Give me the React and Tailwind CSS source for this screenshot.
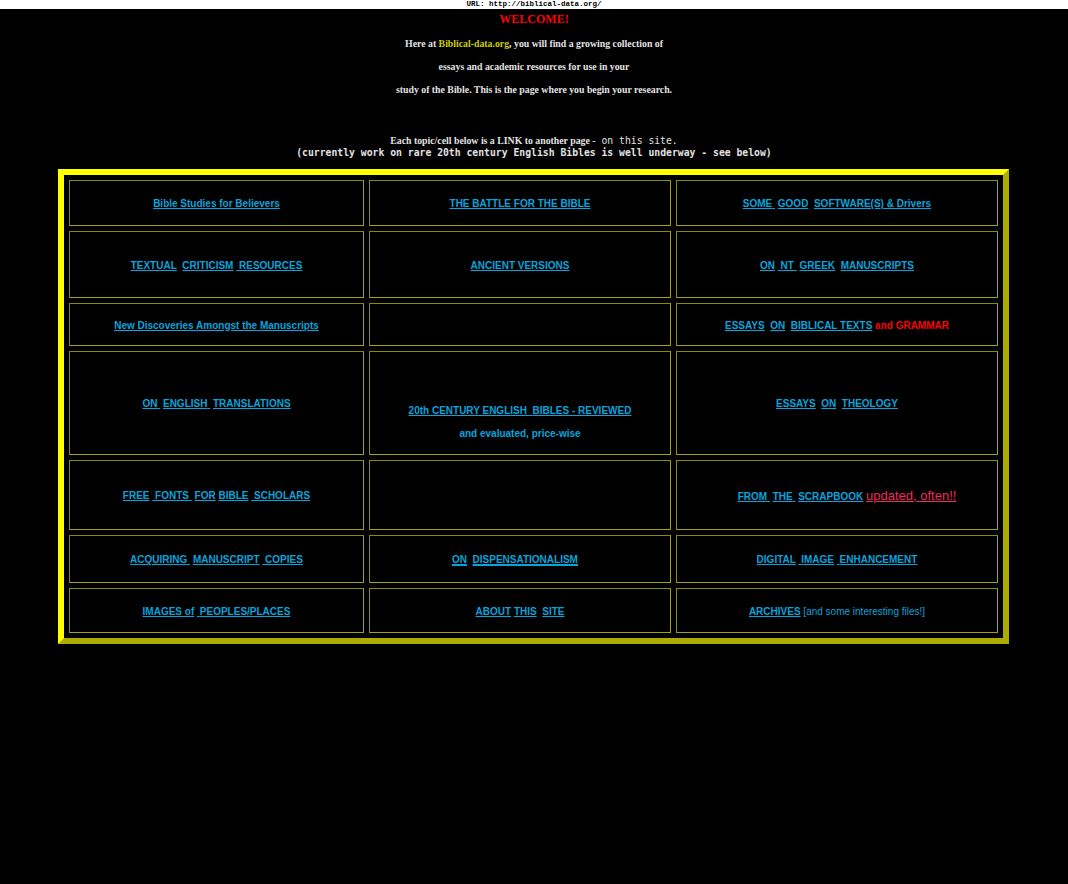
const sans = "font-['Liberation_Sans',Arial,sans-serif]";

function L({ children, className = "" }) {
  return (
    <a href="#" className={"underline decoration-1 underline-offset-[1px] " + className}>
      {children}
    </a>
  );
}

function Cell({ children, className = "" }) {
  return (
    <div
      className={
        "flex items-center justify-center border border-t-[#8a8a00] border-l-[#8a8a00] border-r-[#a4a400] border-b-[#a4a400] pt-[2px] text-center text-[10px] leading-[12px] font-bold text-[#0aa4dc] " +
        className
      }
    >
      {children}
    </div>
  );
}

export default function App() {
  const nb = "\u00a0";
  return (
    <div className="min-h-[884px] bg-black pb-10">
      <div className="h-[9px] bg-white text-center font-['Liberation_Mono',monospace] text-[7.5px] font-bold leading-[9px] text-black">
        URL: http://biblical-data.org/
      </div>

      <div className="pt-[3px] text-center font-['Liberation_Serif',serif] text-[12px] font-bold leading-[15px] text-[#ff0000]">
        WELCOME!
      </div>

      <div className="mt-[11px] flex flex-col items-center gap-[11px] font-['Liberation_Serif',serif] text-[9.8px] font-bold leading-[12px] text-[#e2e2e2]">
        <p>
          Here at <span className="text-[#cccc00]">Biblical-data.org</span>, you will find a growing collection of
        </p>
        <p>essays and academic resources for use in your</p>
        <p>study of the Bible. This is the page where you begin your research.</p>
      </div>

      <div className="mt-[38px] text-center text-[10px] leading-[12px] text-[#e2e2e2]">
        <p>
          <span className="font-['Liberation_Serif',serif] text-[9.8px] font-bold">
            Each topic/cell below is a LINK to another page -
          </span>
          <span className="font-['DejaVu_Sans_Mono',monospace] text-[9.75px]"> on this site.</span>
        </p>
        <p className="font-['DejaVu_Sans_Mono',monospace] text-[9.75px] font-bold">
          (currently work on rare 20th century English Bibles is well underway - see below)
        </p>
      </div>

      <div
        className={
          "ml-[58px] mt-[10px] grid w-[951px] grid-cols-[295px_302px_322px] grid-rows-[46px_67px_43px_104px_70px_48px_45px] gap-[5px] border-[6px] border-t-[#ffff00] border-l-[#ffff00] border-r-[#abab00] border-b-[#abab00] p-[5px] " +
          sans
        }
      >
        <Cell>
          <L>Bible Studies for Believers</L>
        </Cell>
        <Cell>
          <L>THE BATTLE FOR THE BIBLE</L>
        </Cell>
        <Cell>
          <span>
            <L>SOME{nb}</L> <L>GOOD</L>{nb} <L>SOFTWARE(S) &amp; Drivers</L>
          </span>
        </Cell>

        <Cell>
          <span>
            <L>TEXTUAL</L>{nb} <L>CRITICISM</L> <L>{nb}RESOURCES</L>
          </span>
        </Cell>
        <Cell>
          <L>ANCIENT VERSIONS</L>
        </Cell>
        <Cell>
          <span>
            <L>ON</L> <L>{nb}NT{nb}</L> <L>GREEK</L>{nb} <L>MANUSCRIPTS</L>
          </span>
        </Cell>

        <Cell>
          <L>New Discoveries Amongst the Manuscripts</L>
        </Cell>
        <Cell />
        <Cell>
          <span>
            <L>ESSAYS</L>{nb} <L>ON</L>{nb} <L>BIBLICAL TEXTS</L>
            <span className="text-[#ff0000]"> and GRAMMAR</span>
          </span>
        </Cell>

        <Cell>
          <span>
            <L>ON{nb}</L> <L>ENGLISH{nb}</L> <L>TRANSLATIONS</L>
          </span>
        </Cell>
        <Cell className="flex-col !justify-start gap-[11px] !pt-[53px]">
          <p>
            <L>20th CENTURY ENGLISH {nb}BIBLES - REVIEWED</L>
          </p>
          <p>and evaluated, price-wise</p>
        </Cell>
        <Cell>
          <span>
            <L>ESSAYS</L>{nb} <L>ON</L>{nb} <L>THEOLOGY</L>
          </span>
        </Cell>

        <Cell>
          <span>
            <L>FREE</L> <L>{nb}FONTS{nb}</L> <L>FOR</L> <L>BIBLE</L> <L>{nb}SCHOLARS</L>
          </span>
        </Cell>
        <Cell />
        <Cell className="pl-5">
          <span>
            <L>FROM{nb}</L> <L>THE{nb}</L> <L>SCRAPBOOK</L>{" "}
            <L className="text-[13px] font-normal text-[#ec2d58]">updated, often!!</L>
          </span>
        </Cell>

        <Cell>
          <span>
            <L>ACQUIRING{nb}</L> <L>MANUSCRIPT</L> <L>{nb}COPIES</L>
          </span>
        </Cell>
        <Cell className="pr-[10px]">
          <span>
            <L className="decoration-2">ON</L>{nb} <L className="decoration-2">DISPENSATIONALISM</L>
          </span>
        </Cell>
        <Cell>
          <span>
            <L>DIGITAL</L> <L>{nb}IMAGE</L> <L>{nb}ENHANCEMENT</L>
          </span>
        </Cell>

        <Cell>
          <span>
            <L>IMAGES of</L> <L>{nb}PEOPLES/PLACES</L>
          </span>
        </Cell>
        <Cell>
          <span>
            <L>ABOUT</L> <L>THIS</L> {nb}<L>SITE</L>
          </span>
        </Cell>
        <Cell>
          <span>
            <L>ARCHIVES</L>
            <span className="font-normal"> [and some interesting files!]</span>
          </span>
        </Cell>
      </div>
    </div>
  );
}
